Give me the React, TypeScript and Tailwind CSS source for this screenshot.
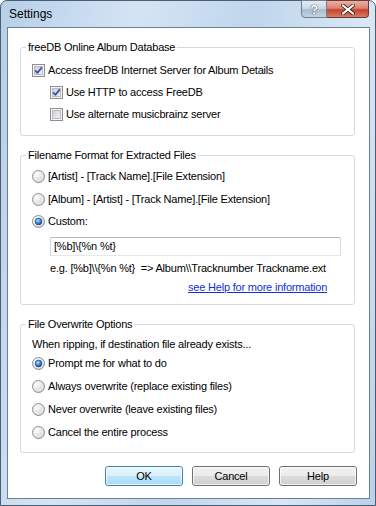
import React from "react";

const F = "font-['Liberation_Sans',Arial,sans-serif]";

function CheckBox({ checked }: { checked?: boolean }) {
  return (
    <svg width="13" height="13" viewBox="0 0 13 13" className="shrink-0">
      <defs>
        <linearGradient id="cbIn" x1="0" y1="0" x2="1" y2="1">
          <stop offset="0" stopColor="#c9ced6" />
          <stop offset="1" stopColor="#f5f6f7" />
        </linearGradient>
      </defs>
      <rect x="0.5" y="0.5" width="12" height="12" fill="#f4f4f4" stroke="#8f8f8f" />
      <rect x="2.5" y="2.5" width="8" height="8" fill="url(#cbIn)" stroke="#b8bcc2" />
      {checked && (
        <path d="M3.2 6.4 L5.4 8.8 L9.8 3.4" fill="none" stroke="#3b5aa3" strokeWidth="1.9" strokeLinejoin="round" />
      )}
    </svg>
  );
}

function Radio({ checked }: { checked?: boolean }) {
  return (
    <svg width="13" height="13" viewBox="0 0 13 13" className="shrink-0">
      <defs>
        <radialGradient id="rbBg" cx="0.35" cy="0.3" r="0.8">
          <stop offset="0" stopColor="#ffffff" />
          <stop offset="1" stopColor="#c9ccd0" />
        </radialGradient>
        <radialGradient id="rbDot" cx="0.4" cy="0.35" r="0.7">
          <stop offset="0" stopColor="#b8e2fb" />
          <stop offset="0.5" stopColor="#3f8fd6" />
          <stop offset="1" stopColor="#143e86" />
        </radialGradient>
      </defs>
      <circle cx="6.5" cy="6.5" r="6" fill="url(#rbBg)" stroke="#8e9093" />
      <circle cx="6.5" cy="6.5" r="4.2" fill="none" stroke="#f3f3f3" strokeWidth="0.8" />
      {checked && <circle cx="6.5" cy="6.5" r="3.4" fill="url(#rbDot)" stroke="#1e3f78" strokeWidth="0.6" />}
    </svg>
  );
}

function CheckRow({ label, checked, indent }: { label: string; checked?: boolean; indent?: boolean }) {
  return (
    <div className={`flex h-[22px] items-center gap-[3px] ${indent ? "pl-[18px]" : ""}`}>
      <CheckBox checked={checked} />
      <span>{label}</span>
    </div>
  );
}

function RadioRow({ label, checked, h }: { label: string; checked?: boolean; h: string }) {
  return (
    <div className={`flex ${h} items-center gap-[3px]`}>
      <Radio checked={checked} />
      <span>{label}</span>
    </div>
  );
}

function Group({ title, children, className }: { title: string; children: React.ReactNode; className?: string }) {
  return (
    <fieldset className={`mt-[13px] rounded-[3px] border border-[#d3dae2] ${className ?? ""}`}>
      <legend className="ml-[5px] px-[2px] leading-[12px]">{title}</legend>
      {children}
    </fieldset>
  );
}

function Btn({ label, def }: { label: string; def?: boolean }) {
  return (
    <div
      className={`flex h-[20px] w-[78px] items-center justify-center rounded-[3px] border ${
        def
          ? "border-[#3c7fb1] bg-[linear-gradient(180deg,#eaf6fd_0%,#d9f0fc_50%,#bee6fd_50%,#a7d9f5_100%)]"
          : "border-[#707070] bg-[linear-gradient(180deg,#f2f2f2_0%,#ebebeb_50%,#dddddd_50%,#cfcfcf_100%)]"
      }`}
    >
      <div className="flex h-full w-full items-center justify-center rounded-[2px] border border-[#ffffffb0]">{label}</div>
    </div>
  );
}

export default function App() {
  return (
    <div
      className={`${F} flex h-[506px] w-[376px] flex-col rounded-t-[7px] border border-[#4b5e74] bg-[linear-gradient(100deg,#b7cfe9_0%,#d5e4f4_30%,#c0d6ec_55%,#d9e7f5_80%,#bad1ea_100%)] text-[11px] tracking-[-0.2px] text-black`}
    >
      {/* title bar */}
      <div className="flex h-[26px] items-start justify-between">
        <div className="pl-[8px] pt-[6px] text-[12px] leading-[14px] tracking-normal text-black">Settings</div>
        <div className="-mt-px mr-[6px] flex">
          <div className="flex h-[18px] w-[26px] items-center justify-center rounded-bl-[4px] border border-[#6d7f92] bg-[linear-gradient(180deg,#e3ebf3_0%,#cdd9e6_45%,#a9bccf_55%,#c5d4e3_100%)] text-[13px] font-bold leading-none text-white [text-shadow:0_0_1px_#2d3d50,0_0_1px_#2d3d50]">
            ?
          </div>
          <div className="flex h-[18px] w-[42px] items-center justify-center rounded-br-[4px] border border-l-0 border-[#6e3a36] bg-[linear-gradient(180deg,#e9b1a6_0%,#d98470_45%,#c4432d_55%,#d77c63_100%)]">
            <svg width="14" height="11" viewBox="0 0 14 11">
              <path d="M2 1.5 L12 9.5 M12 1.5 L2 9.5" stroke="#3b1d1a" strokeWidth="3.6" strokeLinecap="square" />
              <path d="M2 1.5 L12 9.5 M12 1.5 L2 9.5" stroke="#ffffff" strokeWidth="2" strokeLinecap="square" />
            </svg>
          </div>
        </div>
      </div>

      {/* client area */}
      <div className="mb-[6px] ml-[6px] mr-[5px] flex flex-1 flex-col border border-[#6c7f95] bg-white pl-[12px] pr-[14px]">
        <Group title="freeDB Online Album Database">
          <div className="pb-[10px] pl-[11px] pt-[6px]">
            <CheckRow label="Access freeDB Internet Server for Album Details" checked />
            <CheckRow label="Use HTTP to access FreeDB" checked indent />
            <CheckRow label="Use alternate musicbrainz server" indent />
          </div>
        </Group>

        <Group title="Filename Format for Extracted Files">
          <div className="pb-[8px] pl-[11px] pt-[4px]">
            <RadioRow h="h-[23px]" label="[Artist] - [Track Name].[File Extension]" />
            <RadioRow h="h-[22px]" label="[Album] - [Artist] - [Track Name].[File Extension]" />
            <RadioRow h="h-[22px]" label="Custom:" checked />
            <div className="ml-[18px] mr-[13px] mt-[5px] flex h-[19px] items-center border border-[#b6bac1] border-b-[#e3e9ef] border-l-[#d6dae1] border-r-[#d6dae1] pl-[3px]">
              {"[%b]\\{%n %t}"}
            </div>
            <div className="ml-[18px] mt-[3px] flex h-[18px] items-center whitespace-pre">
              {"e.g. [%b]\\\\{%n %t}  => Album\\\\Tracknumber Trackname.ext"}
            </div>
            <div className="ml-[156px] mt-[1px] flex h-[18px] items-center">
              <span className="text-[#1030d8] underline underline-offset-[1px]">see Help for more information</span>
            </div>
          </div>
        </Group>

        <Group title="File Overwrite Options">
          <div className="pb-[8px] pl-[11px] pt-[6px]">
            <div className="flex h-[16px] items-center">When ripping, if destination file already exists...</div>
            <RadioRow h="h-[23px]" label="Prompt me for what to do" checked />
            <RadioRow h="h-[23px]" label="Always overwrite (replace existing files)" />
            <RadioRow h="h-[23px]" label="Never overwrite (leave existing files)" />
            <RadioRow h="h-[23px]" label="Cancel the entire process" />
          </div>
        </Group>

        <div className="-mr-[2px] mt-[13px] flex justify-end gap-[9px]">
          <Btn label="OK" def />
          <Btn label="Cancel" />
          <Btn label="Help" />
        </div>
      </div>
    </div>
  );
}
